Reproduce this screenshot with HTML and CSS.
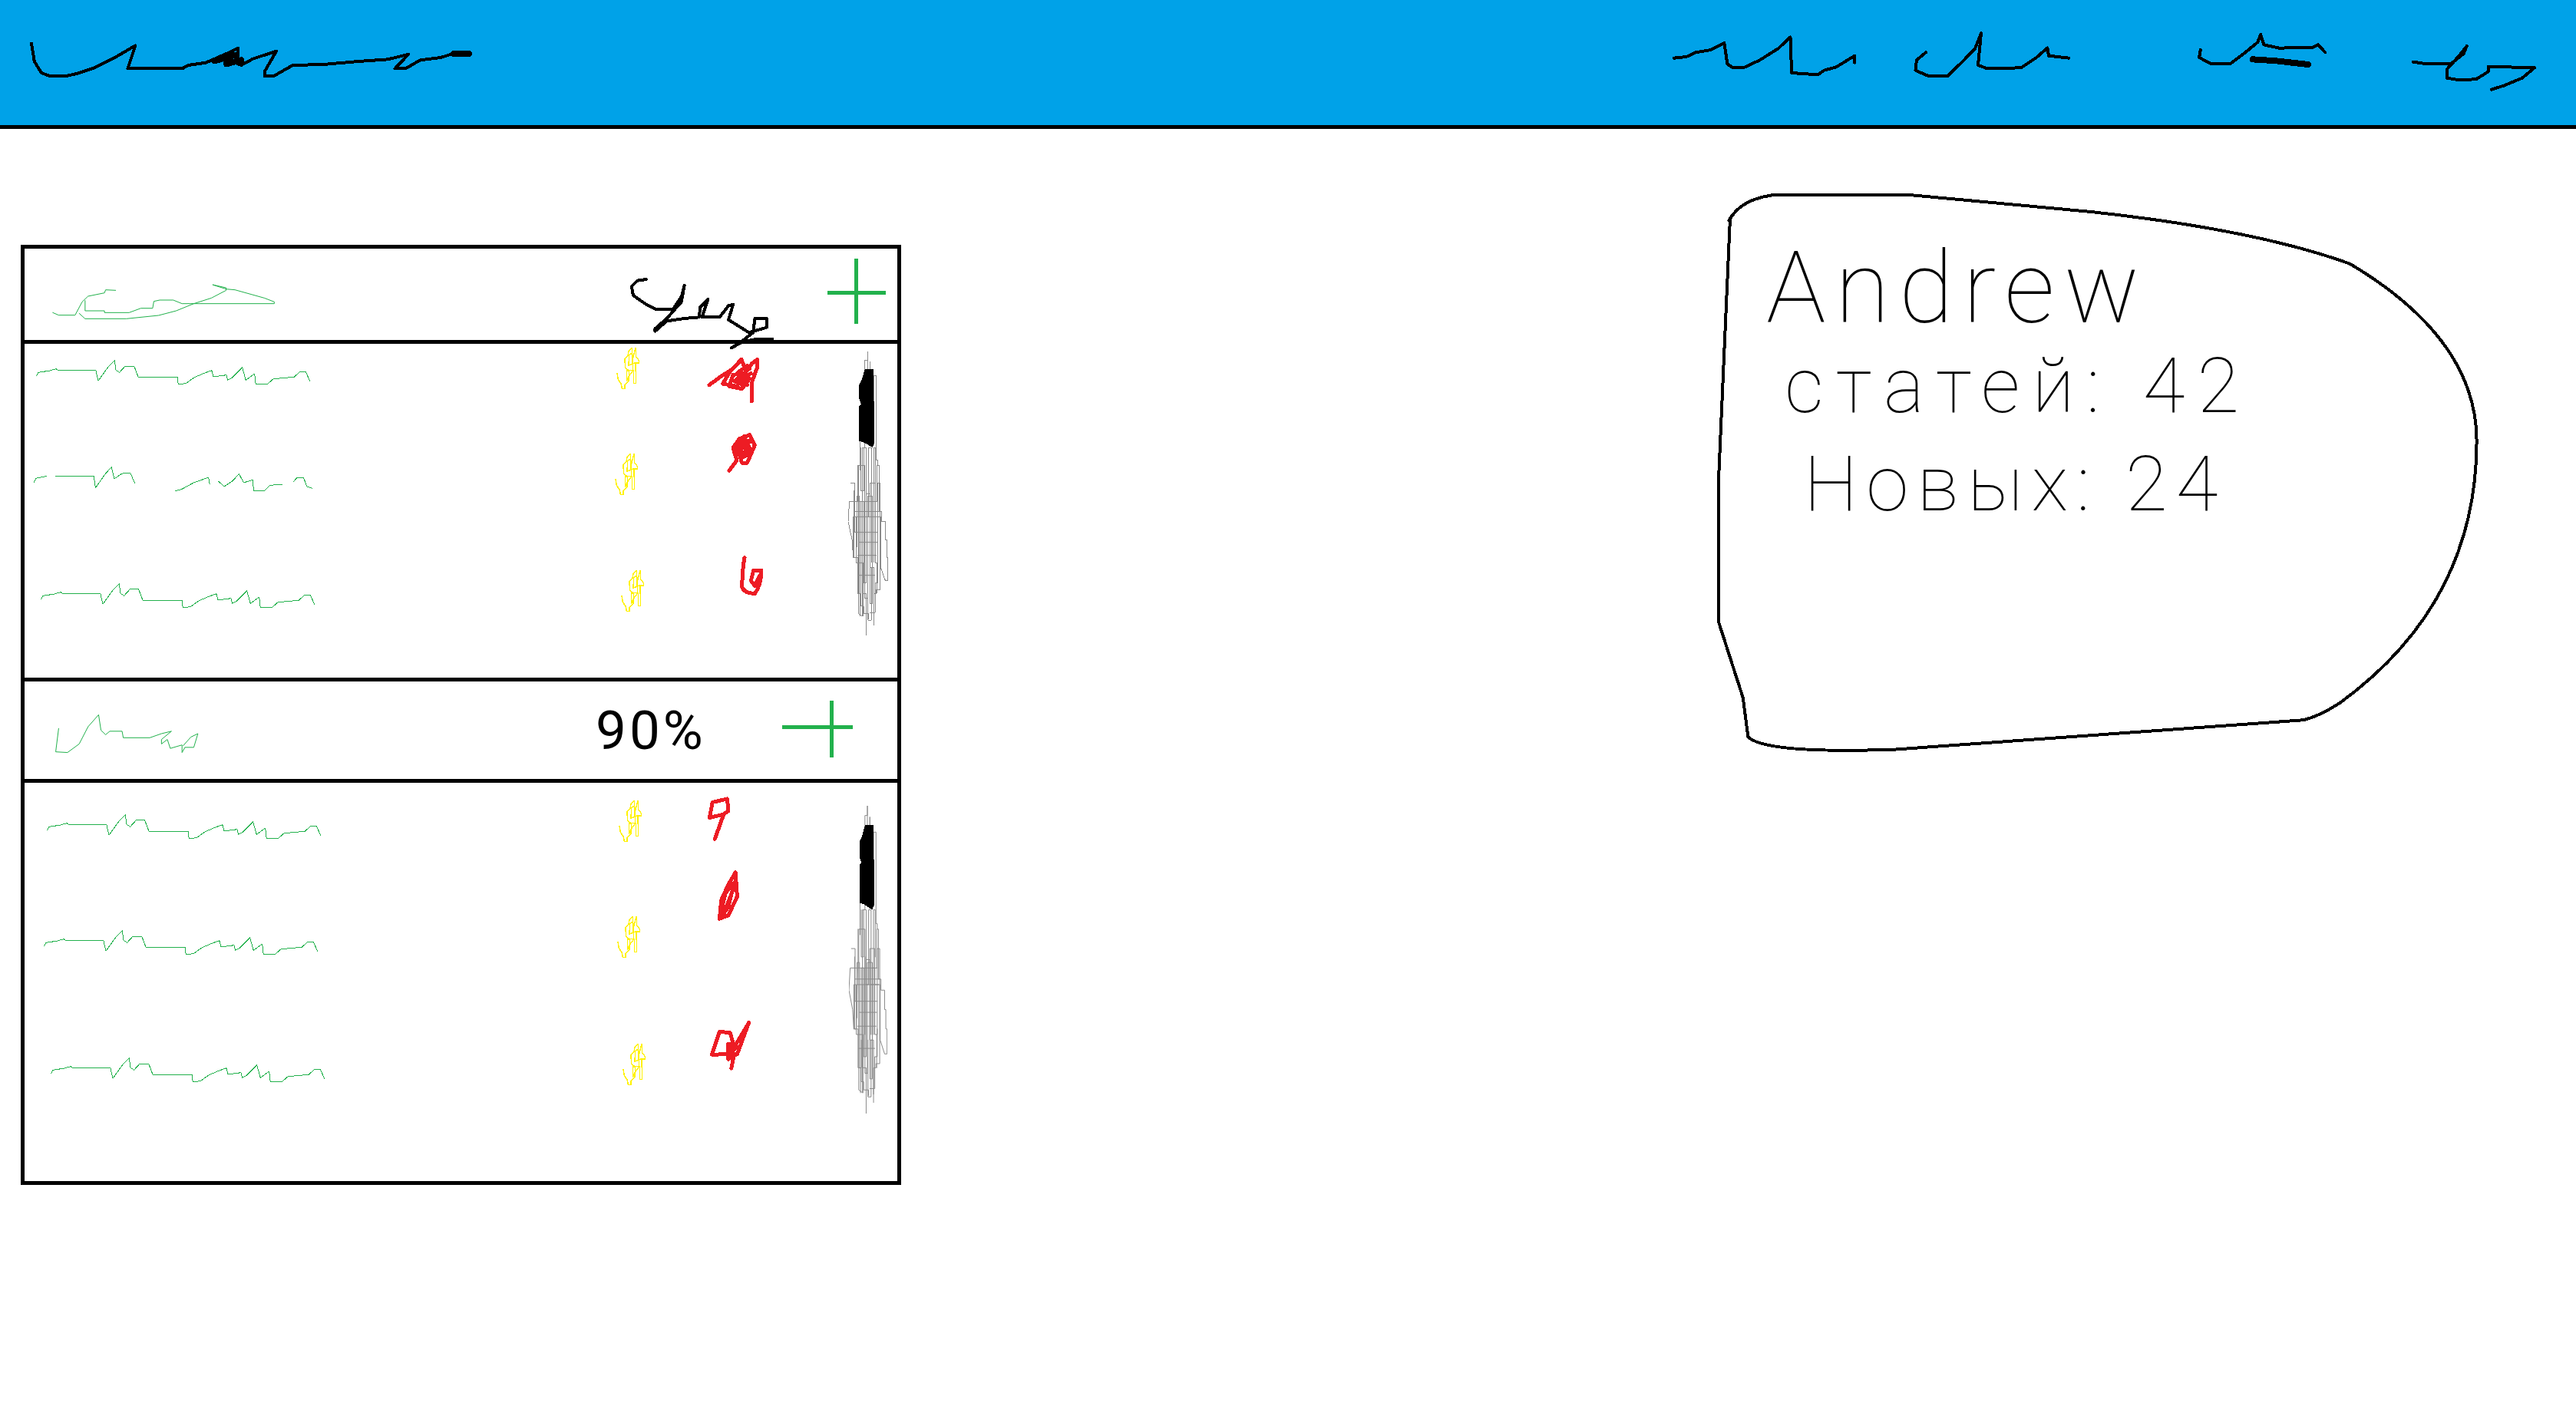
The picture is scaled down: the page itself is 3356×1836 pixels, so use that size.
FILE: index.html
```html
<!DOCTYPE html>
<html lang="ru">
<head>
    <meta charset="UTF-8">
    <title>Профиль</title>
    <link rel="stylesheet" href="styles.css">
</head>
<body>
    <!-- повторяющиеся каракули -->
    <svg class="sprite">
        <symbol id="row-name" viewBox="60 146 470 96" preserveAspectRatio="none">
            <path class="pen-thin" d="M62 208L65 195L85 188L95 181L100 187H163L167 228L185 170L195 148L197 185L203 195L213 170H228L235 213H302L303 241L316 238L330 215L345 200L360 187L363 212L385 205L387 225L395 215L412 175L418 225L433 200L435 241L455 240L465 220L500 213L510 193H520L527 228"/>
        </symbol>
        <symbol id="row-name-split" viewBox="58 563 475 98" preserveAspectRatio="none">
            <path class="pen-thin" d="M58 625L62 608L80 600M95 600H160L163 645L180 590L190 565L195 610L208 590L222 587L230 628M298 658L310 650L330 625L355 605L357 630M372 620L382 640L395 620L407 592L415 625L430 615L432 658L450 657L460 635L480 632M500 620L505 607H517L522 640L531 647"/>
        </symbol>
        <symbol id="row-mark" viewBox="130 40 90 162" preserveAspectRatio="none">
            <path class="pen-yellow" d="M133 140L137 165L148 180L152 200H163V185L178 170L180 130L165 120L163 85L175 70L178 55L192 40V90L205 40L207 75L218 90V100H205L207 180H198V128L170 130V170L180 150L195 130L192 60L180 70L178 110L200 100"/>
        </symbol>
        <symbol id="scroll" viewBox="1035 55 156 1110" preserveAspectRatio="none">
            <path class="pen-gray" d="M1105 1165V1000H1090V430H1100V90H1110V55V400H1120V95V420H1135V150H1145V480H1150V500H1155V680H1165V720H1180V790H1185V860H1190V950H1180L1162 900V700H1140V570H1120V1040H1130V620H1110V1020H1100V500H1075V1080L1090 1090V880H1065V700H1055V860H1065L1070 640H1040L1035 720L1050 790L1055 860"/>
            <path class="pen-gray" d="M1045 570H1060V760M1135 1125V1000H1145V985H1160V570H1150V880H1140V640H1130V900H1120V610H1105V960H1095V640H1085V1000H1078V620H1068V820M1080 360V520M1085 900V1050H1095V1080H1115V1100M1120 1075H1140V960H1150V860M1060 680H1160M1060 760H1150M1070 850H1145M1075 930H1140"/>
            <path class="pen-gray" d="M1085 430V600H1095V430H1105V700H1115V430H1125V700H1135V430H1142V600M1072 500V640M1148 500V640M1058 600V860H1072V1000H1082V1090M1092 880V1090M1112 900V1105H1125V900H1135V1095M1148 880V1000M1070 700H1155M1072 640H1150M1078 800H1148M1100 600V880M1090 700V880M1125 700V880M1135 700V880"/>
            <path class="thumb" d="M1100 125H1135V250H1138V410L1130 430L1095 410L1078 405V270L1085 260L1078 240V185L1090 160Z"/>
        </symbol>
    </svg>

    <header class="topbar">
        <svg class="scrawl logo" viewBox="40 0 775 489" preserveAspectRatio="none">
            <path class="pen-black" d="M53 170L58 240L70 285L85 298H110L130 288L160 265L195 225L230 178L217 268H310L320 255L350 245L385 210L405 188V240L385 255L380 225L410 255L430 230L470 200L450 280V298H465L498 255L550 252L610 240L660 232L695 212L672 268H690L715 235L750 225L770 210H800"/>
            <path class="pen-heavy" d="M365 238L400 215M385 250L410 235M772 210H798"/>
        </svg>
        <nav class="menu">
            <svg class="scrawl menu-one" viewBox="100 0 296 489" preserveAspectRatio="none">
                <path class="pen-black" d="M100 227L120 222L135 205L160 195L182 168L187 250L195 263H215L240 235L270 190L290 145L292 285L335 292L345 275L365 262L395 218V245"/>
            </svg>
            <svg class="scrawl menu-two" viewBox="490 0 255 489" preserveAspectRatio="none">
                <path class="pen-black" d="M510 205L495 235L493 275L515 298H545L570 240L590 190L600 130L595 255L610 268L665 265L690 225L708 187L710 218L743 227"/>
            </svg>
            <svg class="scrawl menu-three" viewBox="840 0 322 489" preserveAspectRatio="none">
                <path class="pen-black" d="M957 195L955 225L975 250H1005L1030 205L1050 165L1055 135L1060 175L1085 188L1140 185L1148 175L1160 205"/>
                <path class="pen-heavy" d="M1042 232L1080 238L1132 252"/>
            </svg>
            <svg class="scrawl menu-four" viewBox="1257 0 248 489" preserveAspectRatio="none">
                <path class="pen-black" d="M1303 242L1325 250L1365 248L1385 210L1390 180L1375 225L1358 270V305L1375 312L1405 310L1425 280V260L1500 265L1480 305L1450 335L1430 350"/>
            </svg>
        </nav>
    </header>

    <main class="page">
        <section class="panel">
            <div class="panel-head head-first">
                <svg class="scrawl" viewBox="42 972 951 357" preserveAspectRatio="none">
                    <path class="pen-thin" d="M90 1222L100 1232H128L140 1180L150 1158L178 1145L180 1133L197 1135M145 1175V1215H178V1222H220L240 1205H260L262 1178L272 1173H295L310 1187H467V1180L450 1165L400 1133L385 1130L362 1113L385 1125V1135L360 1165L330 1187L300 1215L270 1233L215 1246H145L135 1225"/>
                </svg>
                <svg class="scrawl" viewBox="993 972 392 357" preserveAspectRatio="none">
                    <path class="pen-black" d="M1100 1092L1085 1097L1075 1120L1078 1155L1100 1190L1118 1210H1145L1160 1160L1165 1115L1160 1180L1135 1245L1115 1285V1295L1135 1255L1165 1245L1190 1240L1192 1200L1205 1170L1195 1240H1225L1240 1195L1248 1190L1240 1250L1275 1300L1305 1280V1245H1285L1282 1300L1265 1330L1245 1360L1265 1335L1290 1325H1315"/>
                </svg>
                <svg class="scrawl" viewBox="1385 972 142 357" preserveAspectRatio="none">
                    <path class="pen-plus" d="M1457 1012V1265M1408 1145H1508"/>
                </svg>
            </div>
            <div class="rows rows-first">
                <svg class="cell"><use href="#row-name" x="14" y="21" width="360" height="32"/></svg>
                <svg class="cell"><use href="#row-mark" x="43" y="5" width="30" height="54"/></svg>
                <svg class="scrawl" viewBox="360 24 540 321">
                    <path class="pen-red" d="M492 185L540 150L580 125L618 85L635 130L660 100L680 85V115L660 170L658 248M575 130L545 180L600 190L630 140L585 145L570 190L620 200L650 160L610 130L640 185L590 170L650 120M600 140L640 110L625 190L600 165L655 140"/>
                </svg>
                <svg class="cell scroll-cell"><use href="#scroll" x="45" y="10" width="52" height="370"/></svg>

                <svg class="cell"><use href="#row-name-split" x="12" y="53" width="364" height="33"/></svg>
                <svg class="cell"><use href="#row-mark" x="41" y="36" width="30" height="54"/></svg>
                <svg class="scrawl" viewBox="360 345 540 375">
                    <path class="pen-red" d="M570 520L600 480L585 430L610 395L650 380L670 420L640 490H620L605 440L660 400L600 410L620 470L655 450L590 450L630 385L640 460M600 430L650 430L625 395L615 450L660 440"/>
                </svg>

                <svg class="cell"><use href="#row-name" x="20" y="80" width="360" height="32"/></svg>
                <svg class="cell"><use href="#row-mark" x="49" y="63" width="30" height="54"/></svg>
                <svg class="scrawl" viewBox="360 720 540 609">
                    <path class="pen-red" d="M630 860Q622 900 620 975Q630 1000 670 1000Q695 970 695 910H665L655 950L670 970L690 930"/>
                </svg>
            </div>

            <div class="panel-head head-second">
                <svg class="scrawl" viewBox="42 63 951 284" preserveAspectRatio="none">
                    <path class="pen-thin" d="M100 200L95 268L115 270L135 245L150 195L168 160L172 205L180 218L187 208H208L210 227H255L275 215L292 208L275 232V245L285 232L290 258L310 248V270L315 255H330L337 215L325 225L312 250"/>
                </svg>
                <span class="percent">90%</span>
                <svg class="scrawl" viewBox="1307 63 220 284" preserveAspectRatio="none">
                    <path class="pen-plus" d="M1416 120V285M1332 196H1452"/>
                </svg>
            </div>
            <div class="rows rows-second">
                <svg class="cell"><use href="#row-name" x="28" y="41" width="360" height="32"/></svg>
                <svg class="cell"><use href="#row-mark" x="46" y="23" width="30" height="54"/></svg>
                <svg class="scrawl" viewBox="1150 358 235 224" preserveAspectRatio="none">
                    <path class="pen-red" d="M1217 522L1232 450L1208 460L1213 415L1238 405L1240 440L1232 450"/>
                </svg>
                <svg class="cell scroll-cell"><use href="#scroll" x="46" y="30" width="50" height="401"/></svg>

                <svg class="cell"><use href="#row-name" x="24" y="92" width="360" height="32"/></svg>
                <svg class="cell"><use href="#row-mark" x="44" y="74" width="30" height="54"/></svg>
                <svg class="scrawl" viewBox="1150 582 235 426" preserveAspectRatio="none">
                    <path class="pen-red" d="M1225 755L1228 700L1240 655L1252 620L1255 690L1240 745L1225 755L1235 680L1250 650L1240 720L1232 740L1248 670"/>
                </svg>

                <svg class="cell"><use href="#row-name" x="33" y="68" width="360" height="32"/></svg>
                <svg class="cell"><use href="#row-mark" x="51" y="50" width="30" height="54"/></svg>
                <svg class="scrawl" viewBox="1150 1008 235 513" preserveAspectRatio="none">
                    <path class="pen-red" d="M1245 1192L1250 1150L1212 1152L1225 1085L1243 1088L1250 1130L1275 1058L1255 1150L1240 1165V1120L1255 1130L1240 1150L1250 1120L1245 1160"/>
                </svg>
            </div>
        </section>

        <aside class="user-card">
            <svg class="card-outline" viewBox="55 45 1475 1478" preserveAspectRatio="none">
                <path class="pen-black" d="M78 115Q100 60 160 48H435L780 92Q1100 140 1280 230Q1525 430 1525 700Q1525 1130 1260 1395Q1220 1430 1190 1440L400 1518Q150 1530 115 1485L105 1380L58 1180V800L80 115"/>
            </svg>
            <h2 class="user-name">Andrew</h2>
            <p class="user-stat">статей: 42</p>
            <p class="user-stat user-new">Новых: 24</p>
        </aside>
    </main>
</body>
</html>
```

FILE: styles.css
```css
* {
    box-sizing: border-box;
    margin: 0;
    padding: 0;
}

body {
    background: #fff;
    color: #000;
    font-family: Roboto, "Liberation Sans", sans-serif;
    font-weight: 100;
}

.sprite {
    display: none;
}

svg {
    display: block;
    overflow: visible;
    shape-rendering: crispEdges;
}

path {
    fill: none;
    stroke-linejoin: round;
    stroke-linecap: round;
    vector-effect: non-scaling-stroke;
}

/* перья */
.pen-black { stroke: #000; stroke-width: 4px; }
.pen-heavy { stroke: #000; stroke-width: 8px; }
.pen-thin { stroke: #22b14c; stroke-width: 1px; }
.pen-plus { stroke: #22b14c; stroke-width: 5px; stroke-linecap: butt; }
.pen-yellow { stroke: #fff200; stroke-width: 1.5px; }
.pen-red { stroke: #ed1c24; stroke-width: 5px; }
.pen-gray { stroke: #8a8a8a; stroke-width: 1px; }
.thumb { fill: #000; }

.scrawl,
.cell {
    width: 100%;
    height: 100%;
}

/* шапка */
.topbar {
    display: flex;
    height: 168px;
    padding: 0 50px 0 31px;
    background: #00a2e8;
    border-bottom: 5px solid #000;
}

.logo {
    width: 593px;
}

.menu {
    display: flex;
    gap: 76px;
    margin-left: auto;
}

.menu-one { width: 236px; }
.menu-two { width: 204px; }
.menu-three { width: 258px; }
.menu-four { width: 199px; }

/* основная часть */
.page {
    display: flex;
    justify-content: space-between;
    align-items: flex-start;
    padding: 85px 126px 0 27px;
}

.panel {
    width: 1147px;
    margin-top: 66px;
    border: 5px solid #000;
}

.panel-head {
    display: grid;
    border-bottom: 5px solid #000;
}

.head-first {
    grid-template-rows: 119px;
    grid-template-columns: 728px 300px 109px;
}

.head-second {
    grid-template-rows: 127px;
    grid-template-columns: 728px 240px 169px;
}

.percent {
    align-self: center;
    padding-left: 16px;
    font-size: 71px;
    font-weight: 400;
    letter-spacing: 4px;
}

.rows {
    display: grid;
    grid-template-columns: 728px 120px 180px 109px;
}

.rows-first {
    grid-template-rows: 107px 125px 203px;
    border-bottom: 5px solid #000;
}

.rows-second {
    grid-template-rows: 100px 190px 229px;
}

.scroll-cell {
    grid-column: 4;
    grid-row: 1 / -1;
}

/* карточка пользователя */
.user-card {
    position: relative;
    width: 993px;
    height: 726px;
    padding: 58px 0 0 64px;
}

.card-outline {
    position: absolute;
    top: 0;
    left: 0;
    width: 100%;
    height: 100%;
}

.user-name {
    position: relative;
    font-size: 130px;
    font-weight: 100;
    line-height: 130px;
    letter-spacing: 12px;
}

.user-stat {
    position: relative;
    margin-left: 24px;
    margin-top: 12px;
    font-size: 100px;
    line-height: 100px;
    letter-spacing: 16px;
}

.user-new {
    margin-left: 49px;
    margin-top: 28px;
    letter-spacing: 11px;
}
```
